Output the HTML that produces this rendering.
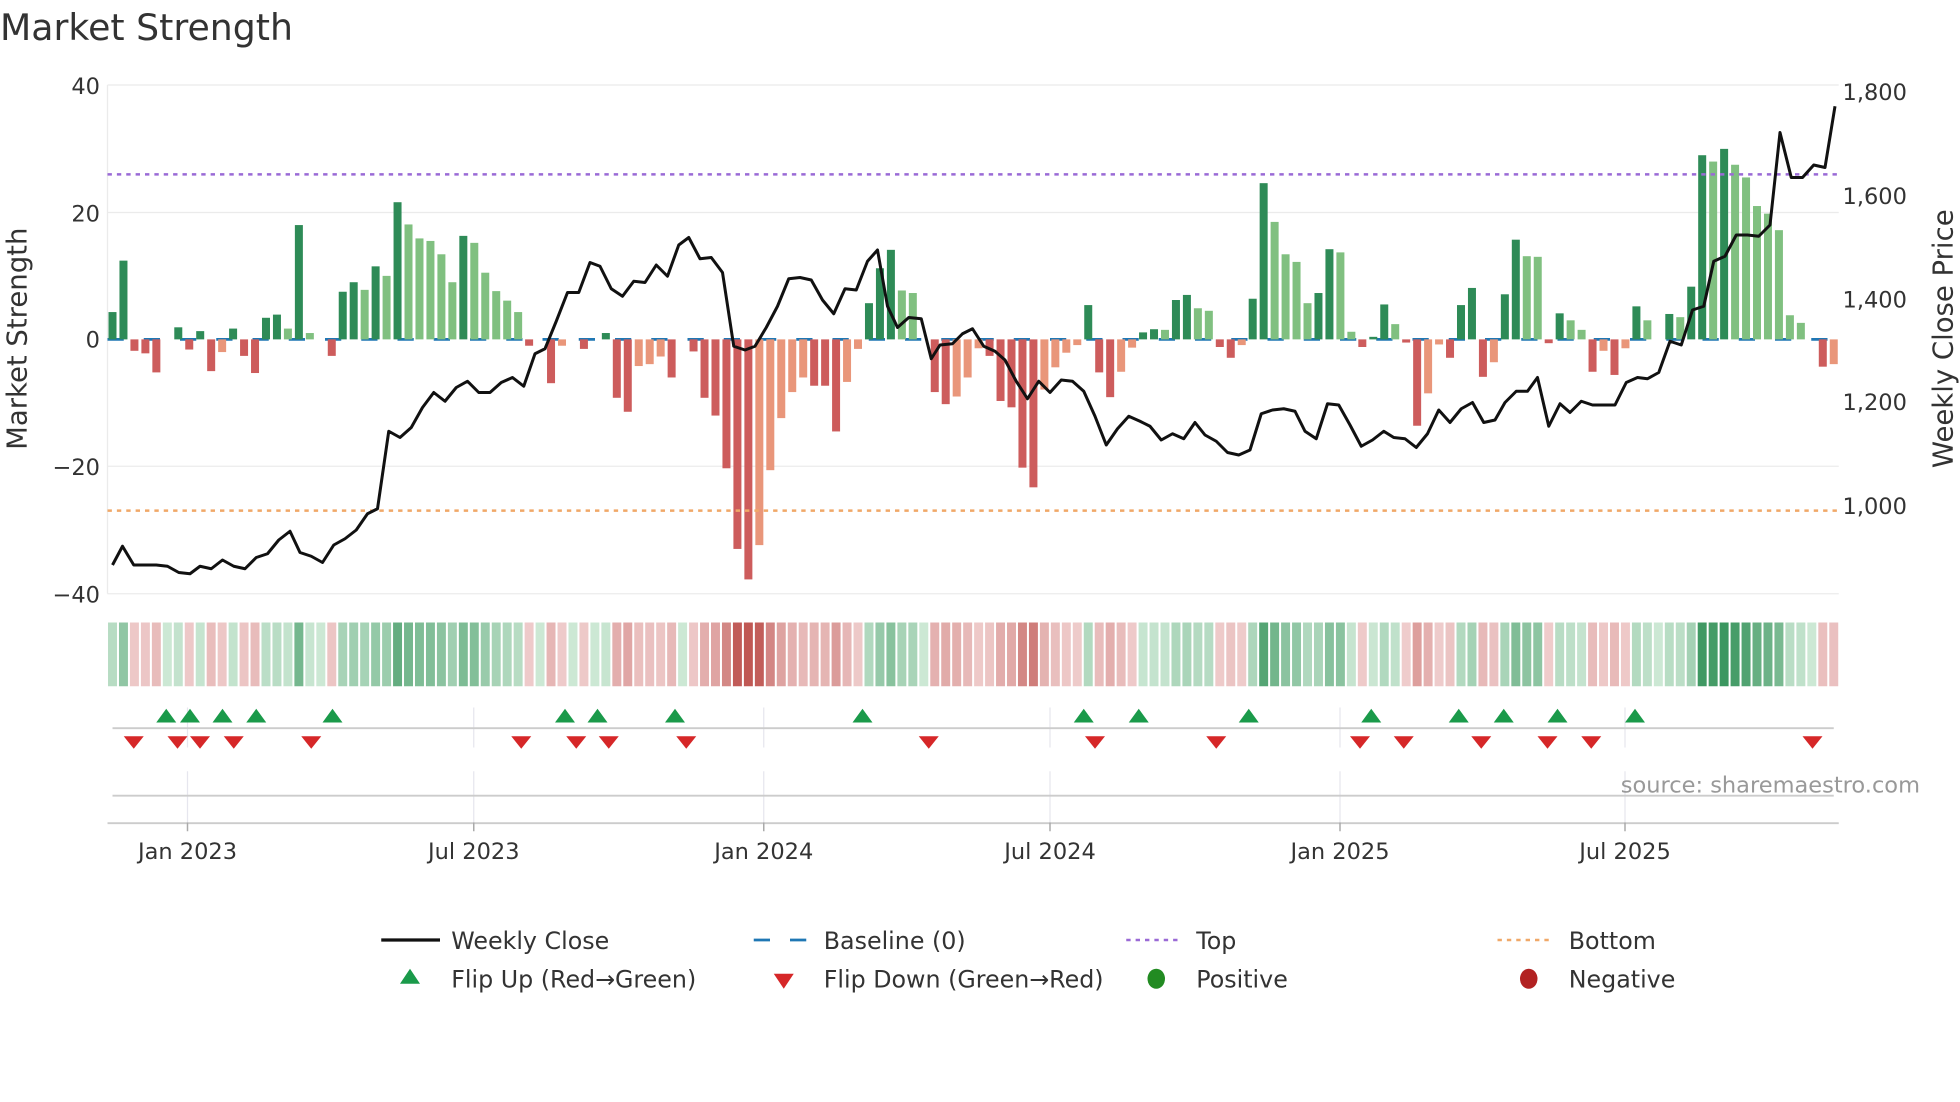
<!DOCTYPE html>
<html><head><meta charset="utf-8"><style>
html,body{margin:0;padding:0;background:#fff;width:1960px;height:1102px;overflow:hidden}
svg{display:block}
text{font-family:"DejaVu Sans","Liberation Sans",sans-serif;fill:#333}
</style></head><body>
<svg id="s" width="1960" height="1102" viewBox="0 0 1568 881.6" xmlns="http://www.w3.org/2000/svg">
<rect width="1568" height="882" fill="#fff"/>
<text x="0" y="32" font-size="29">Market Strength</text>
<g stroke="#ebebeb" stroke-width="1">
<line x1="86" y1="68" x2="1471" y2="68"/><line x1="86" y1="170" x2="1471" y2="170"/>
<line x1="86" y1="373" x2="1471" y2="373"/><line x1="86" y1="475" x2="1471" y2="475"/>
<line x1="86" y1="68" x2="86" y2="475"/>
</g>
<g font-size="18" text-anchor="end">
<text x="80" y="75">40</text><text x="80" y="177">20</text><text x="80" y="278">0</text>
<text x="80" y="380">−20</text><text x="80" y="482">−40</text>
</g>
<g font-size="18">
<text x="1474" y="80">1,800</text><text x="1474" y="163">1,600</text><text x="1474" y="246">1,400</text>
<text x="1474" y="328">1,200</text><text x="1474" y="411">1,000</text>
</g>
<text transform="translate(21,271) rotate(-90)" font-size="22" text-anchor="middle">Market Strength</text>
<text transform="translate(1562,271) rotate(-90)" font-size="22" text-anchor="middle">Weekly Close Price</text>
<line x1="86" y1="271.5" x2="1471" y2="271.5" stroke="#1f77b4" stroke-width="2.2" stroke-dasharray="13 16"/>
<g id="bars"></g>
<line x1="86" y1="139.5" x2="1471" y2="139.5" stroke="#9a6ad6" stroke-width="2" stroke-dasharray="3.5 4"/>
<line x1="86" y1="408.5" x2="1471" y2="408.5" stroke="#f0a868" stroke-width="2" stroke-dasharray="3.5 4"/>
<polyline id="price" fill="none" stroke="#111" stroke-width="2.4" stroke-linejoin="round"/>
<g id="heat"></g>
<g stroke="#e6e6ee" stroke-width="1">
<line x1="150" y1="566" x2="150" y2="598"/><line x1="379" y1="566" x2="379" y2="598"/><line x1="611" y1="566" x2="611" y2="598"/>
<line x1="840" y1="566" x2="840" y2="598"/><line x1="1072" y1="566" x2="1072" y2="598"/><line x1="1300" y1="566" x2="1300" y2="598"/>
<line x1="150" y1="617" x2="150" y2="658"/><line x1="379" y1="617" x2="379" y2="658"/><line x1="611" y1="617" x2="611" y2="658"/>
<line x1="840" y1="617" x2="840" y2="658"/><line x1="1072" y1="617" x2="1072" y2="658"/><line x1="1300" y1="617" x2="1300" y2="658"/>
</g>
<line x1="90" y1="582.5" x2="1467" y2="582.5" stroke="#ccc" stroke-width="1.5"/>
<line x1="90" y1="636.5" x2="1467" y2="636.5" stroke="#ccc" stroke-width="1.5"/>
<line x1="86" y1="658.5" x2="1471" y2="658.5" stroke="#ccc" stroke-width="1.5"/>
<g stroke="#aaa" stroke-width="1.2">
<line x1="150" y1="658" x2="150" y2="665"/><line x1="379" y1="658" x2="379" y2="665"/><line x1="611" y1="658" x2="611" y2="665"/>
<line x1="840" y1="658" x2="840" y2="665"/><line x1="1072" y1="658" x2="1072" y2="665"/><line x1="1300" y1="658" x2="1300" y2="665"/>
</g>
<g id="marks"></g>
<text x="1536" y="634" font-size="18" text-anchor="end" style="fill:#999">source: sharemaestro.com</text>
<g font-size="18" text-anchor="middle">
<text x="150" y="687">Jan 2023</text><text x="379" y="687">Jul 2023</text><text x="611" y="687">Jan 2024</text>
<text x="840" y="687">Jul 2024</text><text x="1072" y="687">Jan 2025</text><text x="1300" y="687">Jul 2025</text>
</g>
<g font-size="19">
<line x1="305" y1="752" x2="352" y2="752" stroke="#111" stroke-width="2.6"/>
<text x="361" y="759">Weekly Close</text>
<line x1="603" y1="752" x2="647" y2="752" stroke="#1f77b4" stroke-width="2.2" stroke-dasharray="13 16"/>
<text x="659" y="759">Baseline (0)</text>
<line x1="901" y1="752" x2="945" y2="752" stroke="#9a6ad6" stroke-width="2" stroke-dasharray="3.5 4"/>
<text x="957" y="759">Top</text>
<line x1="1198" y1="752" x2="1243" y2="752" stroke="#f0a868" stroke-width="2" stroke-dasharray="3.5 4"/>
<text x="1255" y="759">Bottom</text>
<polygon points="320,787 336,787 328,775" fill="#1a9a4a"/>
<text x="361" y="790">Flip Up (Red→Green)</text>
<polygon points="619,779 635,779 627,791" fill="#d62728"/>
<text x="659" y="790">Flip Down (Green→Red)</text>
<ellipse cx="925" cy="783" rx="7" ry="8" fill="#228b22"/>
<text x="957" y="790">Positive</text>
<ellipse cx="1223" cy="783" rx="7" ry="8" fill="#b22222"/>
<text x="1255" y="790">Negative</text>
</g>
</svg>
<script>
var d="4.3G 12.4G -1.8R -2.2R -5.2R 0Z 1.9G -1.6R 1.3G -5R -2O 1.7G -2.6R -5.3R 3.4G 3.9G 1.7L 18G 1L 0Z -2.6R 7.5G 9G 7.8L 11.5G 10L 21.6G 18.1L 15.9L 15.5L 13.4L 9L 16.3G 15.2L 10.5L 7.6L 6.1L 4.3L -1R 0Z -6.9R -1O 0Z -1.5R 0Z 1G -9.2R -11.4R -4.2O -3.9O -2.7O -6R 0Z -1.9R -9.2R -12R -20.3R -33R -37.8R -32.4O -20.6O -12.4O -8.3O -6O -7.3R -7.3R -14.5R -6.7O -1.5O 5.7G 11.2G 14.1G 7.7L 7.3L 0Z -8.3R -10.2R -9O -6O -1.4O -2.6R -9.7R -10.7R -20.2R -23.3R -7.9O -4.4O -2.1O -0.9O 5.4G -5.2R -9.1R -5.1O -1.3O 1.1G 1.6G 1.5L 6.2G 7G 4.9L 4.5L -1.2R -2.9R -0.9O 6.4G 24.6G 18.5L 13.4L 12.2L 5.7L 7.3G 14.2G 13.7L 1.2L -1.2R 0.4G 5.5G 2.4L -0.5R -13.6R -8.5O -0.8O -2.9R 5.4G 8.1G -5.9R -3.6O 7.1G 15.7G 13.1L 13L -0.6R 4.1G 3L 1.5L -5.1R -1.8O -5.6R -1.4O 5.2G 3L 0Z 4G 3.5L 8.3G 29G 28L 30G 27.5L 25.5L 21L 19.8L 17.2L 3.8L 2.6L 0Z -4.3R -3.9O".split(" ");
var col={G:"#2e8b57",L:"#80c080",R:"#cd5c5c",O:"#e9967a",Z:"#80c080"};
var NS="http://www.w3.org/2000/svg";
function el(t,a,p){var e=document.createElementNS(NS,t);for(var k in a)e.setAttribute(k,a[k]);p.appendChild(e);return e;}
var bars=document.getElementById("bars"),heat=document.getElementById("heat");
var n=d.length,sp=(1467-90)/(n-1);
function lerp(a,b,t){return Math.round(a+(b-a)*t);}
for(var i=0;i<n;i++){
 var v=parseFloat(d[i]),c=d[i].slice(-1),x=90+i*sp;
 var y0=271.5,h=v*5.08;
 if(c!="Z")el("rect",{x:x-3.2,y:h>0?y0-h:y0,width:6.4,height:Math.abs(h),fill:col[c]},bars);
 var t=Math.min(Math.abs(v)/34,1),t2=0.12+0.88*t,f;
 if(v>=0)f="rgb("+lerp(226,40,t2)+","+lerp(244,140,t2)+","+lerp(230,80,t2)+")";
 else f="rgb("+lerp(246,192,t2)+","+lerp(222,88,t2)+","+lerp(222,84,t2)+")";
 el("rect",{x:x-sp/2+0.8,y:498,width:sp-1.6,height:51,fill:f},heat);
}
var p=[90,452,98,437,107,452,116,452,125,452,134,453,143,458,152,459,160,453,169,455,178,448,187,453,196,455,205,446,214,443,223,432,232,425,240,442,249,445,258,450,267,436,276,431,285,424,294,411,302,407,311,345,320,350,329,342,338,326,347,314,356,321,365,310,374,305,383,314,392,314,401,306,410,302,419,309,428,283,436,279,445,257,454,234,463,234,472,210,480,213,489,231,498,237,507,225,516,226,525,212,534,221,543,196,551,190,560,207,569,206,578,218,587,277,596,280,604,277,613,262,622,245,631,223,640,222,649,224,658,240,667,251,676,231,685,232,694,209,702,200,710,245,718,262,727,254,737,255,745,287,752,276,762,275,770,267,778,263,787,277,796,281,804,288,813,305,822,319,831,305,840,314,849,304,858,305,867,313,876,333,885,356,894,343,903,333,912,337,920,341,929,352,938,347,947,351,956,338,964,348,973,353,982,362,991,364,1000,360,1009,331,1018,328,1027,327,1036,329,1044,345,1053,351,1062,323,1071,324,1080,340,1089,357,1098,352,1107,345,1115,350,1124,351,1133,358,1142,347,1151,328,1160,338,1169,327,1178,322,1187,338,1196,336,1204,322,1213,313,1222,313,1230,302,1239,341,1248,323,1256,330,1265,321,1274,324,1283,324,1292,324,1301,306,1310,302,1318,303,1327,298,1336,273,1345,276,1354,248,1363,245,1371,209,1380,205,1389,188,1398,188,1407,189,1416,180,1424,106,1433,142,1442,142,1451,132,1460,134,1468,85];
var s="";for(var j=0;j<p.length;j+=2)s+=p[j]+","+p[j+1]+" ";
document.getElementById("price").setAttribute("points",s);
var m=document.getElementById("marks");
[133,152,178,205,266,452,478,540,690,867,911,999,1097,1167,1203,1246,1308].forEach(function(x){el("polygon",{points:(x-8)+",578 "+(x+8)+",578 "+x+",567",fill:"#1a9a4a"},m);});
[107,142,160,187,249,417,461,487,549,743,876,973,1088,1123,1185,1238,1273,1450].forEach(function(x){el("polygon",{points:(x-8)+",589 "+(x+8)+",589 "+x+",599",fill:"#d62728"},m);});
</script>
</body></html>
